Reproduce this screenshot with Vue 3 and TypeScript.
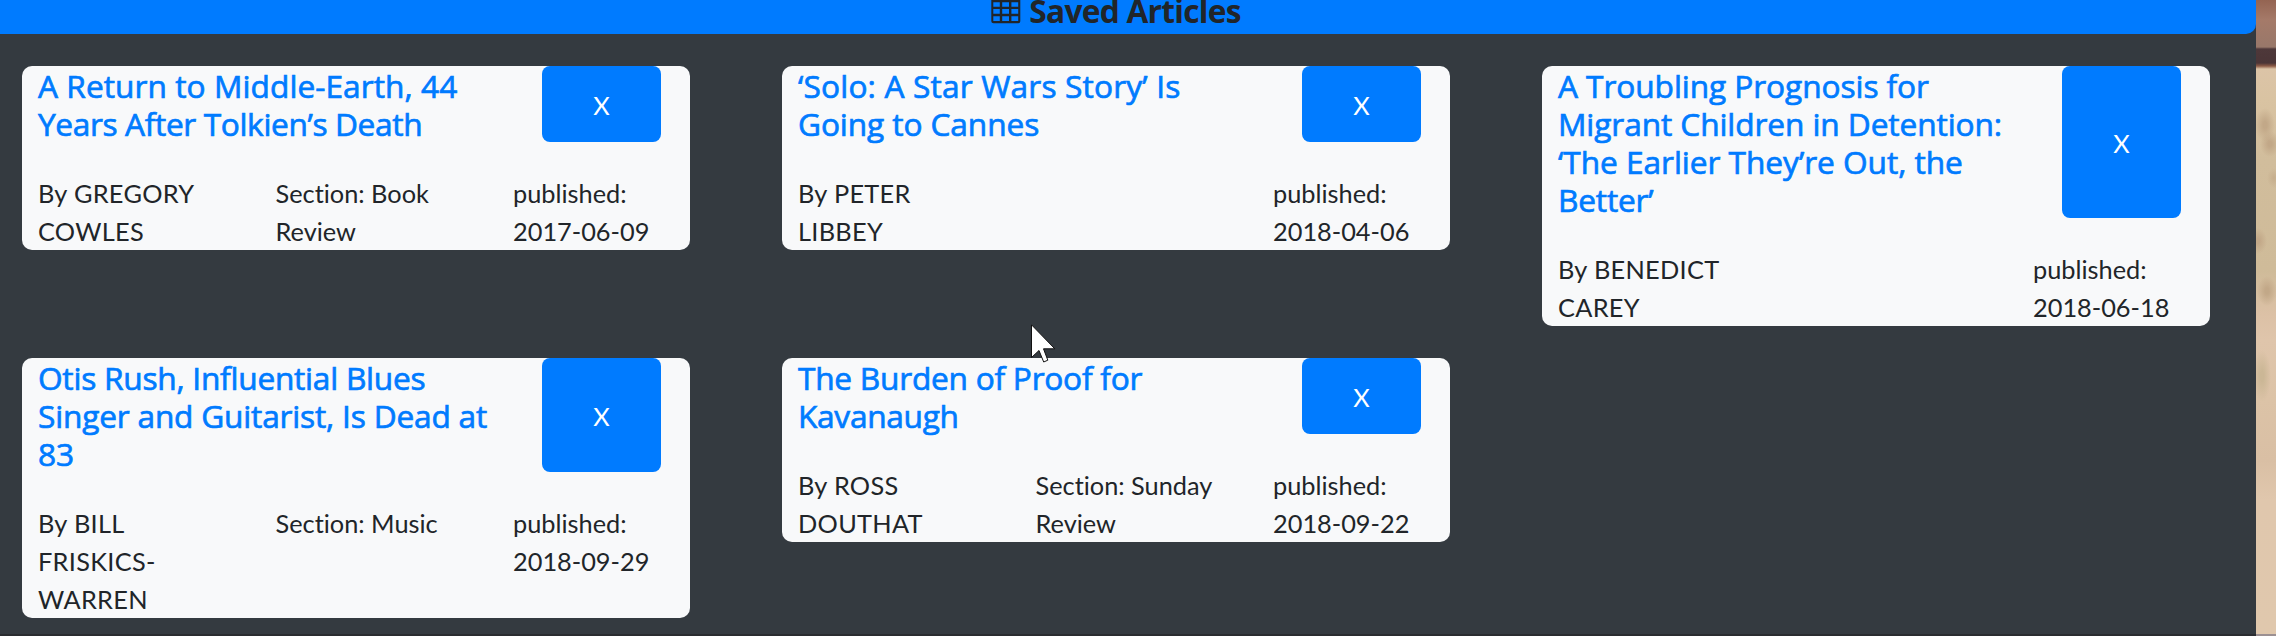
<script setup lang="ts">
interface TitleLine {
  text: string
  tracking: number
}

interface Article {
  title: TitleLine[]
  author: string[]
  section: string[]
  date: string
}

const line = (text: string, tracking = -0.2): TitleLine => ({ text, tracking })

const articles: Article[] = [
  { title: [line('A Return to Middle-Earth, 44', 0.05), line('Years After Tolkien’s Death', -0.37)], author: ['By GREGORY', 'COWLES'], section: ['Section: Book', 'Review'], date: '2017-06-09' },
  { title: [line('‘Solo: A Star Wars Story’ Is', 0.16), line('Going to Cannes', -0.1)], author: ['By PETER', 'LIBBEY'], section: [], date: '2018-04-06' },
  { title: [line('A Troubling Prognosis for', -0.08), line('Migrant Children in Detention:', -0.1), line('‘The Earlier They’re Out, the', -0.05), line('Better’')], author: ['By BENEDICT', 'CAREY'], section: [], date: '2018-06-18' },
  { title: [line('Otis Rush, Influential Blues', -0.25), line('Singer and Guitarist, Is Dead at'), line('83')], author: ['By BILL', 'FRISKICS-', 'WARREN'], section: ['Section: Music'], date: '2018-09-29' },
  { title: [line('The Burden of Proof for', -0.25), line('Kavanaugh', -0.3)], author: ['By ROSS', 'DOUTHAT'], section: ['Section: Sunday', 'Review'], date: '2018-09-22' },
]
</script>

<template>
  <div class="page">
    <main class="panel">
      <header class="bar">
        <svg class="table-icon" viewBox="0 0 30 24" width="30" height="24">
          <path fill-rule="evenodd" d="M0 0H29.3V21.3Q29.3 23.3 27.3 23.3H2.6Q.3 23.3 .3 21.3V0ZM2.3 2.2V6.8H8.8V2.2ZM11.2 2.2V6.8H18V2.2ZM20.4 2.2V6.8H27.2V2.2ZM2.3 9.1V13.8H8.8V9.1ZM11.2 9.1V13.8H18V9.1ZM20.4 9.1V13.8H27.2V9.1ZM2.3 16.2V20.9H8.8V16.2ZM11.2 16.2V20.9H18V16.2ZM20.4 16.2V20.9H27.2V16.2Z" />
        </svg>
        <h1>Saved Articles</h1>
      </header>
      <section class="grid">
        <article v-for="a in articles" :key="a.date" class="card">
          <div class="head">
            <h2><span v-for="l in a.title" :key="l.text" :style="{ letterSpacing: l.tracking + 'px' }">{{ l.text }}</span></h2>
            <button type="button">X</button>
          </div>
          <div class="meta">
            <p class="author"><span v-for="l in a.author" :key="l">{{ l }}</span></p>
            <p><span v-for="l in a.section" :key="l">{{ l }}</span></p>
            <p><span>published:</span><span>{{ a.date }}</span></p>
          </div>
        </article>
      </section>
    </main>
    <aside class="backdrop"></aside>
    <div class="edge"></div>
    <svg class="cursor" viewBox="0 0 26 40" width="26" height="40">
      <path d="M.5 .8V33.5L8 26.5L12.7 38L16.8 36.2L12.5 24.8H23.8Z" />
    </svg>
  </div>
</template>

<style>
body { margin: 0; overflow: hidden; }
</style>

<style scoped>
.page {
  position: relative;
  display: flex;
  width: 2276px;
  height: 636px;
  overflow: hidden;
  font-family: Lato, sans-serif;
  font-variant-ligatures: none;
  color: #212529;
}
.panel { width: 2256px; height: 636px; background: #343a40; }
.bar {
  display: flex;
  justify-content: center;
  align-items: flex-start;
  box-sizing: border-box;
  height: 34px;
  padding-right: 24px;
  gap: 8px;
  background: #007bff;
  border-radius: 0 0 10px 0;
}
.table-icon { flex: none; fill: #212529; }
h1 {
  margin: -8px 0 0;
  font: 700 31.67px/38px "Open Sans", sans-serif;
  letter-spacing: -0.72px;
  white-space: nowrap;
}
.grid {
  display: grid;
  grid-template-columns: repeat(3, 668px);
  column-gap: 92px;
  row-gap: 32px;
  align-items: start;
  padding: 32px 22px 0;
}
.card { background: #f8f9fa; border-radius: 10px; }
.head { display: flex; justify-content: space-between; padding: 0 29px 0 16px; }
h2 {
  margin: 0;
  font: 500 31.67px/38px "Open Sans", sans-serif;
  font-variant-ligatures: none;
  -webkit-text-stroke: 0.7px #007bff;
  color: #007bff;
}
h2 span { padding-top: 1px; margin-bottom: -1px; }
h2 span, p span { display: block; white-space: nowrap; }
button {
  width: 119px;
  border: 0;
  border-radius: 8px;
  padding: 2px 0 0;
  background: #007bff;
  color: #fff;
  font: 400 25.33px/38px Lato, sans-serif;
}
.meta {
  display: grid;
  grid-template-columns: repeat(3, 237.5px);
  margin-top: 32px;
  padding-left: 16px;
}
p { margin: 0; font-size: 25.33px; line-height: 38px; }
.author { letter-spacing: 0.3px; }
.backdrop {
  width: 20px;
  background:
    radial-gradient(ellipse 10px 17px at 9px 125px, #c2a888 20%, transparent),
    radial-gradient(ellipse 10px 13px at 14px 144px, #c2a888 20%, transparent),
    radial-gradient(ellipse 7px 10px at 18px 178px, #c7af8e 10%, transparent),
    radial-gradient(ellipse 9px 13px at 2px 241px, #c2a888 20%, transparent),
    radial-gradient(ellipse 10px 15px at 11px 291px, #c2a888 20%, transparent),
    radial-gradient(ellipse 9px 26px at 6px 376px, #cbb796 20%, transparent),
    linear-gradient(#946452 0, #a57a69 20px, #98786a 47px, #4e383a 49px, #4b3537 63px, #8c5a45 66px, #dcc4a7 69px, #d9c3a2 100px, #d1bd9c 160px, #cfbb99 270px, #dcc1a6 315px, #dfc5ab 340px, #dcc3a7 400px, #d9bfa4 460px, #e0c7ad 500px, #e0c8ad 636px);
}
.edge {
  position: absolute;
  left: 0;
  right: 0;
  bottom: 0;
  height: 2px;
  background: linear-gradient(90deg, #2a2c30 2256px, #9b9092 2256px);
}
.cursor { position: absolute; left: 1031px; top: 324px; fill: #fff; stroke: #111; stroke-width: 1; }
</style>
